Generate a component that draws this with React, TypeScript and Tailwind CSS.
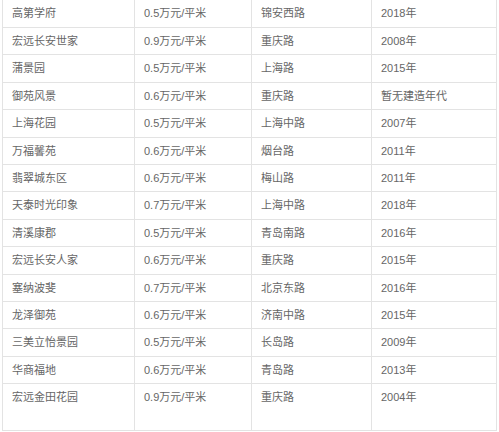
const rows: [string, string, string, string][] = [
  ["高第学府", "0.5万元/平米", "锦安西路", "2018年"],
  ["宏远长安世家", "0.9万元/平米", "重庆路", "2008年"],
  ["蒲景园", "0.5万元/平米", "上海路", "2015年"],
  ["御苑风景", "0.6万元/平米", "重庆路", "暂无建造年代"],
  ["上海花园", "0.5万元/平米", "上海中路", "2007年"],
  ["万福馨苑", "0.6万元/平米", "烟台路", "2011年"],
  ["翡翠城东区", "0.6万元/平米", "梅山路", "2011年"],
  ["天泰时光印象", "0.7万元/平米", "上海中路", "2018年"],
  ["清溪康郡", "0.5万元/平米", "青岛南路", "2016年"],
  ["宏远长安人家", "0.6万元/平米", "重庆路", "2015年"],
  ["塞纳波斐", "0.7万元/平米", "北京东路", "2016年"],
  ["龙泽御苑", "0.6万元/平米", "济南中路", "2015年"],
  ["三美立怡景园", "0.5万元/平米", "长岛路", "2009年"],
  ["华商福地", "0.6万元/平米", "青岛路", "2013年"],
  ["宏远金田花园", "0.9万元/平米", "重庆路", "2004年"],
];

export default function App() {
  return (
    <div className="w-[499px] h-[432px] overflow-hidden bg-white pl-[2px]">
      <div
        className="w-[495px] border-l border-r border-b border-[#e3e3e3] text-[11px] text-[#666]"
        style={{ fontFamily: '"Liberation Sans", "Noto Sans CJK SC", sans-serif' }}
      >
        {rows.map((r, i) => (
          <div
            key={i}
            className={`grid grid-cols-[131px_117px_120px_1fr] border-[#e3e3e3] ${i > 0 ? "border-t" : ""} ${
              i === rows.length - 1 ? "h-[47px]" : i === 0 ? "h-[27px]" : "h-[27.4px]"
            }`}
          >
            {r.map((c, j) => (
              <div
                key={j}
                className={`pl-[9px] pt-[6px] leading-[14px] border-[#e3e3e3] ${j > 0 ? "border-l" : ""}`}
              >
                {c}
              </div>
            ))}
          </div>
        ))}
      </div>
    </div>
  );
}
